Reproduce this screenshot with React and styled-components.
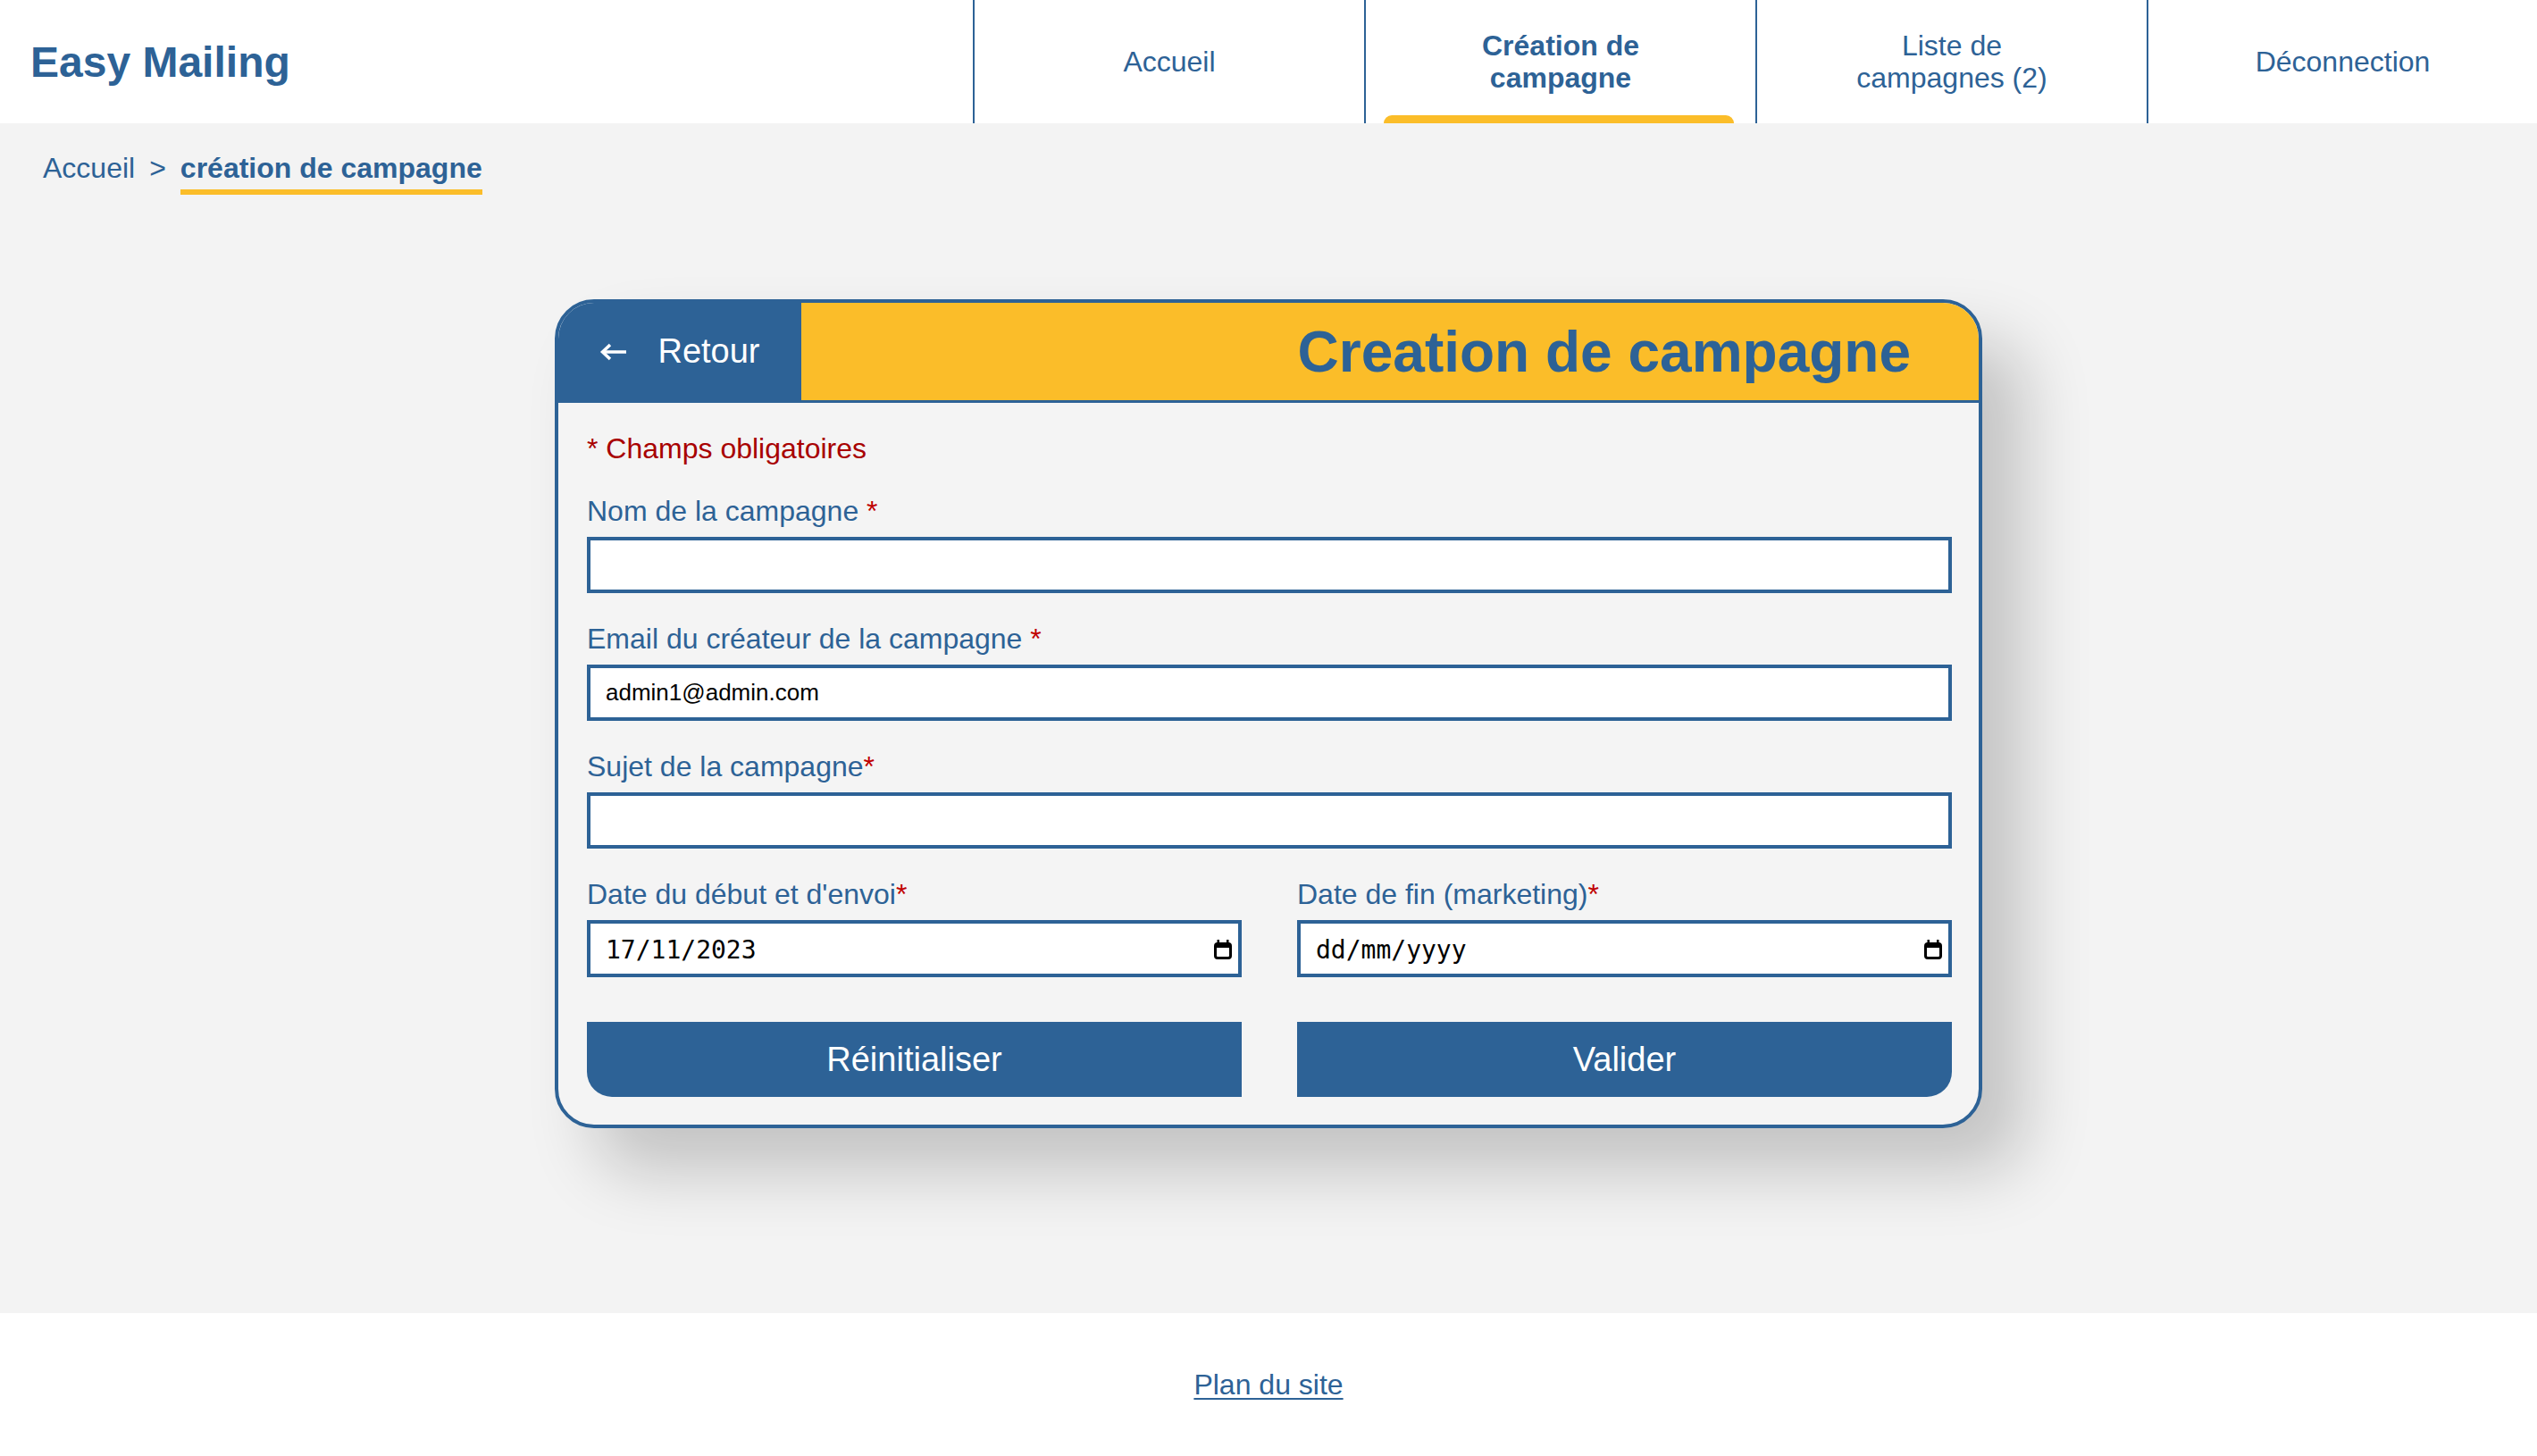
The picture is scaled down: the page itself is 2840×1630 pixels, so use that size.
import styled, { createGlobalStyle } from 'styled-components'

const BLUE = '#2d6296'
const YELLOW = '#fbbd29'
const RED = '#a80000'

const GlobalStyle = createGlobalStyle`
  * { box-sizing: border-box; }
  html, body {
    margin: 0;
    padding: 0;
    background: #f3f3f3;
    font-family: "Liberation Sans", Arial, Helvetica, sans-serif;
  }
`

const Page = styled.div`
  min-height: 100vh;
  display: flex;
  flex-direction: column;
`

const Header = styled.header`
  height: 138px;
  background: #fff;
  display: flex;
  align-items: stretch;
`

const Logo = styled.div`
  flex: 1;
  align-self: center;
  padding-left: 34px;
  font-size: 48px;
  font-weight: 700;
  color: ${BLUE};
`

const Nav = styled.nav`
  display: flex;
`

const NavTab = styled.a`
  width: ${p => p.$last ? 437 : 438}px;
  border-left: 2px solid ${BLUE};
  display: flex;
  flex-direction: column;
  padding-top: 9px;
  text-decoration: none;
  cursor: pointer;
`

const NavLabel = styled.span`
  flex: 1;
  display: flex;
  align-items: center;
  justify-content: center;
  text-align: center;
  padding: 0 80px;
  font-size: 32px;
  line-height: 36px;
  color: ${BLUE};
  font-weight: ${p => p.$active ? 700 : 400};
`

const ActiveBar = styled.span`
  height: 9px;
  margin: 0 24px 0 20px;
  border-radius: 9px 9px 0 0;
  background: ${p => p.$active ? YELLOW : 'transparent'};
`

const Main = styled.main`
  flex: 1;
  padding: 32px 48px 80px;
`

const Breadcrumb = styled.div`
  display: flex;
  align-items: flex-start;
  gap: 16px;
  font-size: 32px;
  line-height: 37px;
  color: ${BLUE};
`

const Crumb = styled.span`
  font-weight: ${p => p.$current ? 700 : 400};
  padding-bottom: ${p => p.$current ? '5px' : '0'};
  border-bottom: ${p => p.$current ? `6px solid ${YELLOW}` : 'none'};
`

const Card = styled.section`
  width: 1598px;
  margin: 117px auto 0;
  border: 4px solid ${BLUE};
  border-radius: 44px;
  overflow: hidden;
  background: #f4f4f4;
  box-shadow: 46px 48px 76px rgba(0, 0, 0, 0.2);
`

const CardHeader = styled.div`
  display: flex;
  height: 112px;
  border-bottom: 3px solid ${BLUE};
`

const BackButton = styled.button`
  width: 272px;
  border: none;
  background: ${BLUE};
  color: #fff;
  display: flex;
  align-items: center;
  justify-content: center;
  gap: 33px;
  font-family: inherit;
  font-size: 38px;
  padding: 0;
  cursor: pointer;
`

const CardTitle = styled.h1`
  flex: 1;
  margin: 0;
  background: ${YELLOW};
  display: flex;
  align-items: center;
  justify-content: flex-end;
  padding: 0 76px 0 0;
  font-size: 64px;
  font-weight: 700;
  color: ${BLUE};
`

const Form = styled.form`
  display: flex;
  flex-direction: column;
  gap: 33px;
  padding: 33px 30px 31px 32px;
`

const Required = styled.div`
  font-size: 32px;
  line-height: 37px;
  color: ${RED};
`

const Field = styled.div`
  display: flex;
  flex-direction: column;
  gap: 10px;
`

const Label = styled.label`
  font-size: 32px;
  line-height: 37px;
  color: ${BLUE};
`

const Star = styled.span`
  color: #c00000;
`

const TextInput = styled.input`
  width: 100%;
  height: 63px;
  border: 4px solid ${BLUE};
  border-radius: 0;
  background: #fff;
  padding: 0 17px;
  font-family: inherit;
  font-size: 26px;
  color: #000;
  outline: none;
`

const Row = styled.div`
  display: grid;
  grid-template-columns: 1fr 1fr;
  column-gap: 62px;
  margin-top: ${p => p.$offset || 0}px;
`

const DateBox = styled.div`
  height: 64px;
  border: 4px solid ${BLUE};
  background: #fff;
  display: flex;
  align-items: center;
  padding: 2px 7px 0 17px;
`

const DateInput = styled.input`
  flex: 1;
  min-width: 0;
  border: none;
  outline: none;
  background: transparent;
  padding: 0;
  font-family: "DejaVu Sans Mono", "Liberation Mono", monospace;
  font-size: 28px;
  color: #000;
  &::placeholder { color: #000; opacity: 1; }
`

const Button = styled.button`
  height: 84px;
  border: none;
  background: ${BLUE};
  color: #fff;
  font-family: inherit;
  font-size: 38px;
  cursor: pointer;
  border-radius: ${p => p.$side === 'left' ? '0 0 0 28px' : '0 0 28px 0'};
`

const Footer = styled.footer`
  height: 160px;
  background: #fff;
  display: flex;
  align-items: center;
  justify-content: center;
`

const FooterLink = styled.a`
  font-size: 32px;
  color: ${BLUE};
  text-decoration: underline;
  text-decoration-thickness: 2px;
  text-underline-offset: 4px;
`

const ArrowLeft = () => (
  <svg width="32" height="20" viewBox="0 0 32 20" fill="none">
    <path d="M30 10H4" stroke="#fff" strokeWidth="3.5" />
    <path d="M12 2L3.5 10L12 18" stroke="#fff" strokeWidth="3.5" />
  </svg>
)

const CalendarIcon = () => (
  <svg width="20" height="22" viewBox="0 0 20 22" fill="none">
    <rect x="1.5" y="4.5" width="17" height="16" rx="2.5" stroke="#000" strokeWidth="3" />
    <rect x="1" y="4" width="18" height="5" rx="2" fill="#000" />
    <rect x="3.5" y="0" width="2.5" height="5" fill="#000" />
    <rect x="14" y="0" width="2.5" height="5" fill="#000" />
  </svg>
)

const tabs = [
  { label: 'Accueil' },
  { label: 'Création de campagne', active: true },
  { label: 'Liste de campagnes (2)' },
  { label: 'Déconnection' },
]

function App () {
  return (
    <>
      <GlobalStyle />
      <Page>
        <Header>
          <Logo>Easy Mailing</Logo>
          <Nav>
            {tabs.map((t, i) => (
              <NavTab key={t.label} $last={i === tabs.length - 1}>
                <NavLabel $active={t.active}>{t.label}</NavLabel>
                <ActiveBar $active={t.active} />
              </NavTab>
            ))}
          </Nav>
        </Header>

        <Main>
          <Breadcrumb>
            <Crumb>Accueil</Crumb>
            <span>&gt;</span>
            <Crumb $current>création de campagne</Crumb>
          </Breadcrumb>

          <Card>
            <CardHeader>
              <BackButton type="button">
                <ArrowLeft />
                Retour
              </BackButton>
              <CardTitle>Creation de campagne</CardTitle>
            </CardHeader>

            <Form onSubmit={e => e.preventDefault()}>
              <Required>* Champs obligatoires</Required>

              <Field>
                <Label>Nom de la campagne <Star>*</Star></Label>
                <TextInput type="text" />
              </Field>

              <Field>
                <Label>Email du créateur de la campagne <Star>*</Star></Label>
                <TextInput type="text" defaultValue="admin1@admin.com" />
              </Field>

              <Field>
                <Label>Sujet de la campagne<Star>*</Star></Label>
                <TextInput type="text" />
              </Field>

              <Row>
                <Field>
                  <Label>Date du début et d'envoi<Star>*</Star></Label>
                  <DateBox>
                    <DateInput type="text" defaultValue="17/11/2023" />
                    <CalendarIcon />
                  </DateBox>
                </Field>
                <Field>
                  <Label>Date de fin (marketing)<Star>*</Star></Label>
                  <DateBox>
                    <DateInput type="text" placeholder="dd/mm/yyyy" />
                    <CalendarIcon />
                  </DateBox>
                </Field>
              </Row>

              <Row $offset={17}>
                <Button type="reset" $side="left">Réinitialiser</Button>
                <Button type="submit" $side="right">Valider</Button>
              </Row>
            </Form>
          </Card>
        </Main>

        <Footer>
          <FooterLink href="#">Plan du site</FooterLink>
        </Footer>
      </Page>
    </>
  )
}

export default App
